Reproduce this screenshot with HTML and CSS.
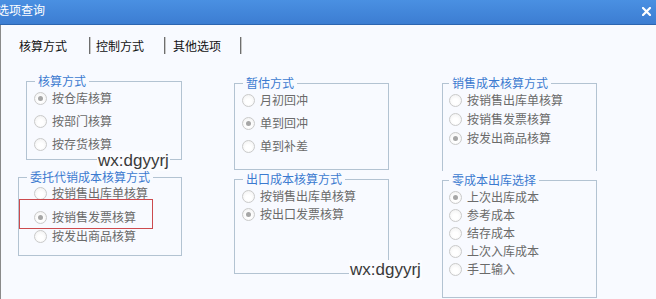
FILE: index.html
```html
<!DOCTYPE html>
<html lang="zh">
<head>
<meta charset="utf-8">
<link rel="stylesheet" href="styles.css">
</head>
<body>
<div class="window">
  <div class="titlebar">
    <span class="title">选项查询</span>
    <svg class="close" width="9" height="9" viewBox="0 0 9 9"><path d="M1 1 L8 8 M8 1 L1 8" stroke="#fff" stroke-width="2.2" stroke-linecap="square"/></svg>
  </div>
  <div class="main">
    <div class="tabs">
      <div class="tab first">核算方式</div><span class="sep"></span>
      <div class="tab">控制方式</div><span class="sep"></span>
      <div class="tab third">其他选项</div><span class="sep"></span>
    </div>
    <div class="grid">
      <div class="col col1">
        <div class="group g1">
          <span class="legend">核算方式</span>
          <div class="row"><span class="radio on"></span>按仓库核算</div>
          <div class="row"><span class="radio"></span>按部门核算</div>
          <div class="row"><span class="radio"></span>按存货核算</div>
        </div>
        <div class="group g4">
          <span class="legend">委托代销成本核算方式</span>
          <div class="row"><span class="radio"></span>按销售出库单核算</div>
          <div class="row hl"><span class="radio on"></span>按销售发票核算</div>
          <div class="row"><span class="radio"></span>按发出商品核算</div>
          <div class="redbox"></div>
        </div>
      </div>
      <div class="col col2">
        <div class="group g2">
          <span class="legend">暂估方式</span>
          <div class="row"><span class="radio"></span>月初回冲</div>
          <div class="row"><span class="radio on"></span>单到回冲</div>
          <div class="row"><span class="radio"></span>单到补差</div>
        </div>
        <div class="group g5">
          <span class="legend">出口成本核算方式</span>
          <div class="row"><span class="radio"></span>按销售出库单核算</div>
          <div class="row"><span class="radio on"></span>按出口发票核算</div>
        </div>
      </div>
      <div class="col col3">
        <div class="group g3">
          <span class="legend">销售成本核算方式</span>
          <div class="row"><span class="radio"></span>按销售出库单核算</div>
          <div class="row"><span class="radio"></span>按销售发票核算</div>
          <div class="row"><span class="radio on"></span>按发出商品核算</div>
        </div>
        <div class="group g6">
          <span class="legend">零成本出库选择</span>
          <div class="row"><span class="radio on"></span>上次出库成本</div>
          <div class="row"><span class="radio"></span>参考成本</div>
          <div class="row"><span class="radio"></span>结存成本</div>
          <div class="row"><span class="radio"></span>上次入库成本</div>
          <div class="row"><span class="radio"></span>手工输入</div>
        </div>
      </div>
    </div>
    <div class="wm wm1">wx:dgyyrj</div>
    <div class="wm wm2">wx:dgyyrj</div>
  </div>
</div>
</body>
</html>
```
FILE: styles.css
```css
* { box-sizing: border-box; }
html, body { margin: 0; padding: 0; }
body {
  width: 656px;
  height: 299px;
  overflow: hidden;
  background: #f8faff;
  font-family: "Noto Sans CJK SC", "Microsoft YaHei", sans-serif;
  font-size: 12px;
}
.window { width: 656px; height: 299px; }
.titlebar {
  height: 25px;
  background: linear-gradient(#4a90e2, #3c7dd2);
  border-bottom: 1px solid #2c65b0;
  display: flex;
  align-items: center;
  justify-content: space-between;
  padding-right: 5px;
}
.title {
  color: #fff;
  margin-left: -3px;
  margin-top: -5px;
  font-size: 12px;
  line-height: 14px;
}
.close { margin-top: -2px; }
.main {
  position: relative;
  height: 274px;
  padding-top: 12px;
  border-left: 1px solid #8a8a8a;
}
.tabs {
  display: flex;
  align-items: center;
  height: 17px;
  padding-left: 18px;
}
.tab { color: #111; line-height: 17px; width: 73px; padding-left: 5px; }
.tab.first { width: 70px; padding-left: 0; }
.tab.third { padding-left: 7px; width: 74px; }
.sep {
  width: 2px;
  height: 17px;
  border-left: 1px solid #6e6e6e;
  border-right: 1px solid #c8c8c8;
}
.grid {
  display: grid;
  grid-template-columns: 163px 155px 155px;
  column-gap: 53px;
  margin-top: 27px;
  padding-left: 17px;
}
.col { display: flex; flex-direction: column; }
.col2, .col3 { padding-top: 2px; }
.group {
  position: relative;
  border: 1px solid #b3c3d2;
  display: flex;
  flex-direction: column;
  color: #6a6a6a;
  padding: 7px 0 0 7px;
}
.legend {
  position: absolute;
  top: -8px;
  left: 8px;
  line-height: 14px;
  padding: 0 3px;
  background: #f8faff;
  color: #3c7ad0;
  white-space: nowrap;
}
.row {
  display: flex;
  align-items: center;
  height: 18px;
  line-height: 18px;
  white-space: nowrap;
}
.radio {
  width: 13px;
  height: 13px;
  border-radius: 50%;
  border: 1px solid #cacaca;
  background: radial-gradient(circle at 50% 60%, #ffffff 30%, #eeeeee 100%);
  margin-right: 5px;
  position: relative;
  flex: none;
}
.radio.on::after {
  content: "";
  position: absolute;
  left: 3px;
  top: 3px;
  width: 5px;
  height: 5px;
  border-radius: 50%;
  background: #a6a6a6;
}
.g1 { margin-left: 8px; width: 156px; height: 79px; gap: 5px; }
.g4 { margin-top: 17px; width: 164px; height: 79px; padding-left: 15px; padding-top: 6px; gap: 1px; }
.g4 .hl { margin-top: 5px; }
.g2 { height: 87px; gap: 5px; }
.g5 { margin-top: 9px; height: 95px; }
.g3 { height: 88px; gap: 1px; padding-left: 6px; border-bottom: none; }
.g3 .legend, .g6 .legend { left: 6px; }
.g6 { margin-top: 9px; height: 118px; padding-left: 6px; }
.redbox {
  position: absolute;
  left: 0;
  top: 21px;
  width: 134px;
  height: 30px;
  border: 1px solid #cc4a4e;
}
.wm {
  position: absolute;
  font-family: "Liberation Sans", Arial, sans-serif;
  font-size: 17px;
  line-height: 20px;
  color: #3a3a3a;
  background: #fbfcff;
  padding: 0 1px;
}
.wm1 { left: 96px; top: 126px; }
.wm2 { left: 348px; top: 235px; }
```
